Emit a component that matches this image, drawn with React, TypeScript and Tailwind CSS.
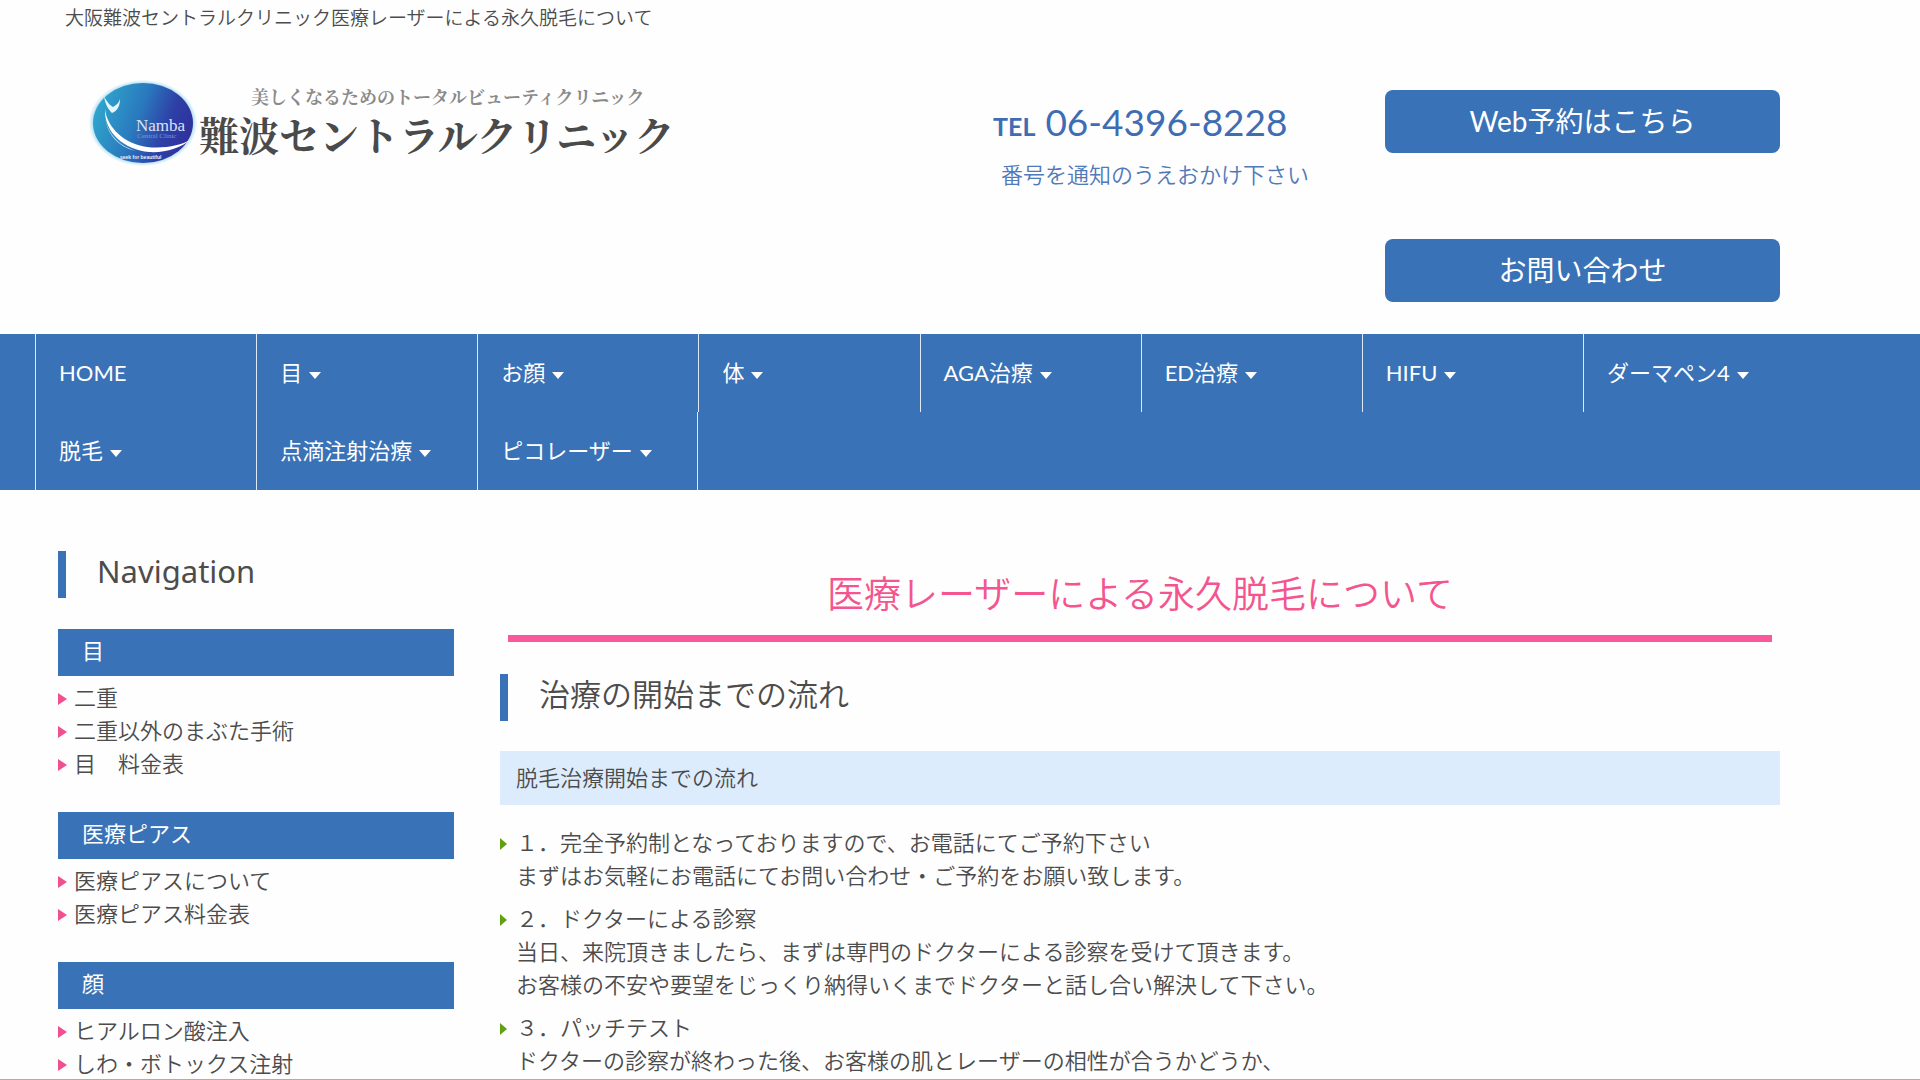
interface NavItem {
    label: string;
    hasMenu?: boolean;
}

interface SideGroup {
    title: string;
    links: string[];
}

const navItems: NavItem[] = [
    { label: "HOME" },
    { label: "目", hasMenu: true },
    { label: "お顔", hasMenu: true },
    { label: "体", hasMenu: true },
    { label: "AGA治療", hasMenu: true },
    { label: "ED治療", hasMenu: true },
    { label: "HIFU", hasMenu: true },
    { label: "ダーマペン4", hasMenu: true },
    { label: "脱毛", hasMenu: true },
    { label: "点滴注射治療", hasMenu: true },
    { label: "ピコレーザー", hasMenu: true },
];

const sideGroups: SideGroup[] = [
    { title: "目", links: ["二重", "二重以外のまぶた手術", "目　料金表"] },
    { title: "医療ピアス", links: ["医療ピアスについて", "医療ピアス料金表"] },
    { title: "顔", links: ["ヒアルロン酸注入", "しわ・ボトックス注射"] },
];

const steps: string[][] = [
    [
        "１．完全予約制となっておりますので、お電話にてご予約下さい",
        "まずはお気軽にお電話にてお問い合わせ・ご予約をお願い致します。",
    ],
    [
        "２．ドクターによる診察",
        "当日、来院頂きましたら、まずは専門のドクターによる診察を受けて頂きます。",
        "お客様の不安や要望をじっくり納得いくまでドクターと話し合い解決して下さい。",
    ],
    [
        "３．パッチテスト",
        "ドクターの診察が終わった後、お客様の肌とレーザーの相性が合うかどうか、",
    ],
];

const LogoMark = () => (
    <svg viewBox="0 0 112 90" className="h-[90px] w-28 shrink-0" aria-hidden="true">
        <defs>
            <linearGradient id="disc" x1="0" y1="0.3" x2="1" y2="0.6">
                <stop offset="0" stopColor="#2fa9cd" />
                <stop offset="0.45" stopColor="#2a78bd" />
                <stop offset="0.75" stopColor="#2e3fa6" />
                <stop offset="1" stopColor="#30309c" />
            </linearGradient>
            <radialGradient id="halo">
                <stop offset="0.9" stopColor="#8fcdea" />
                <stop offset="1" stopColor="#d9f1fb" stopOpacity="0.3" />
            </radialGradient>
        </defs>
        <ellipse cx="56" cy="45" rx="54" ry="43" fill="url(#halo)" />
        <ellipse cx="56" cy="45" rx="50" ry="40" fill="url(#disc)" />
        {/* figure with raised arms */}
        <path d="M17 18 C19 22 22 27 26 29 C30 27 32 24 33 21 C33 27 31 33 25 35 C21 31 18 26 17 18Z" fill="#e4f5fb" />
        <path d="M18 31 C20 50 38 66 60 69 C78 71 94 67 103 62 C94 70 78 75 62 74 C38 72 17 55 18 31Z" fill="#fff" />
        <path d="M18 38 C20 56 33 69 50 73 C36 71 20 60 18 38Z" fill="#cbe9f6" />
        <text x="49" y="53" fontFamily="Liberation Serif, serif" fontSize="17" fontWeight="normal" fill="#dbe2f7">Namba</text>
        <text x="50" y="60" fontFamily="Liberation Serif, serif" fontSize="7" fontWeight="normal" fill="#8295d3">Central Clinic</text>
        <text x="33" y="81" fontFamily="Liberation Sans, sans-serif" fontSize="5" fill="#e8eefb">seek for beautiful</text>
    </svg>
);

const Caret = () => (
    <svg viewBox="0 0 12 7" className="mt-1.5 h-[7px] w-3" aria-hidden="true">
        <path d="M0 0H12L6 7Z" fill="currentColor" />
    </svg>
);

const BarHeading = ({ children }: { children: React.ReactNode }) => (
    <h2 className="flex h-[47px] items-center border-l-8 border-[#3972b7] pb-1.5 pl-[31px] font-[Noto_Sans,Noto_Sans_CJK_JP,sans-serif] text-[31px] leading-none">
        {children}
    </h2>
);

const Header = () => (
    <header className="pb-8">
        <p className="pl-[65px] pt-1 text-[19px] leading-7">
            大阪難波セントラルクリニック医療レーザーによる永久脱毛について
        </p>
        <div className="grid grid-cols-[1fr_392px_395px] pl-[87px] pr-[140px] pt-[58px]">
            <a href="#" className="-mt-3 flex items-start font-bold">
                <LogoMark />
                <span className="flex flex-col font-[Noto_Serif_CJK_JP,Noto_Sans_CJK_JP,serif]">
                    <span className="pl-[52px] pt-1.5 text-[18px] leading-6 text-[#8a8a8a]">
                        美しくなるためのトータルビューティクリニック
                    </span>
                    <span className="text-[40px] leading-[52px] text-[#4a4a4a]">
                        難波セントラルクリニック
                    </span>
                </span>
            </a>
            <div className="pt-[7px] text-[#3f6db3]">
                <p className="flex items-baseline gap-2.5 leading-[50px]">
                    <span className="text-[25px] font-bold">TEL</span>
                    <a href="tel:0643968228" className="text-[37px] font-normal">06-4396-8228</a>
                </p>
                <p className="pl-2 pt-2 text-[22px] leading-8 text-[#5079b9]">番号を通知のうえおかけ下さい</p>
            </div>
            <div className="flex flex-col gap-[86px] text-[28px] font-normal text-white">
                <a href="#" className="flex h-[63px] items-center justify-center rounded-lg bg-[#3972b7] pb-0.5">
                    Web予約はこちら
                </a>
                <a href="#" className="flex h-[63px] items-center justify-center rounded-lg bg-[#3972b7] pb-0.5">
                    お問い合わせ
                </a>
            </div>
        </div>
    </header>
);

const MainNav = () => (
    <nav className="bg-[#3972b7] pl-[35px] pr-[116px] text-[22px] font-normal text-white">
        <ul className="grid grid-cols-8">
            {navItems.map((item) => (
                <li key={item.label} className="border-l border-[#dce9f7] last:border-r">
                    <a href="#" className="flex h-[78px] items-center gap-[7px] pb-0.5 pl-[23px]">
                        {item.label}
                        {item.hasMenu && <Caret />}
                    </a>
                </li>
            ))}
        </ul>
    </nav>
);

const Sidebar = () => (
    <aside className="w-[396px] shrink-0">
        <BarHeading>
            <span className="font-normal">Navigation</span>
        </BarHeading>
        <div className="mt-[31px] flex flex-col gap-8">
            {sideGroups.map((group) => (
                <section key={group.title}>
                    <h3 className="h-[47px] bg-[#3972b7] pl-6 text-[22px] font-normal leading-[43px] text-white">
                        {group.title}
                    </h3>
                    <ul className="pt-[5px]">
                        {group.links.map((link) => (
                            <li key={link}>
                                <a href="#" className="flex items-center gap-[7px] leading-[33px]">
                                    <svg viewBox="0 0 9 12" className="mt-0.5 h-3 w-[9px]" aria-hidden="true">
                                        <path d="M0 0L9 6L0 12Z" fill="#f0508f" />
                                    </svg>
                                    {link}
                                </a>
                            </li>
                        ))}
                    </ul>
                </section>
            ))}
        </div>
    </aside>
);

const App = () => {
    return (
        <div className="h-screen overflow-hidden border-b border-[#b5a9a9] bg-[#fefefe] font-[Lato,Noto_Sans_CJK_JP,sans-serif] text-[22px] font-[350] text-[#4c4c4c]">
            <Header />
            <MainNav />
            <div className="flex gap-[46px] pl-[58px] pr-[140px] pt-[61px]">
                <Sidebar />
                <main className="min-w-0 flex-1">
                    <h1 className="mx-2 border-b-[7px] border-[#fa589c] pb-3.5 pt-4 text-center text-[37px] leading-[54px] text-[#f4558f]">
                        医療レーザーによる永久脱毛について
                    </h1>
                    <div className="pt-8">
                        <BarHeading>治療の開始までの流れ</BarHeading>
                    </div>
                    <h3 className="mt-[30px] bg-[#dcecfd] px-4 py-2.5 leading-[34px]">
                        脱毛治療開始までの流れ
                    </h3>
                    <ol className="flex flex-col gap-2.5 pt-[21px]">
                        {steps.map((lines) => (
                            <li key={lines[0]} className="flex gap-[9px] leading-[33px]">
                                <svg viewBox="0 0 7 12" className="mt-3 h-3 w-[7px] shrink-0" aria-hidden="true">
                                    <path d="M0 0L7 6L0 12Z" fill="#62a012" />
                                </svg>
                                <div>
                                    {lines.map((line) => (
                                        <p key={line}>{line}</p>
                                    ))}
                                </div>
                            </li>
                        ))}
                    </ol>
                </main>
            </div>
        </div>
    );
};

export default App;
